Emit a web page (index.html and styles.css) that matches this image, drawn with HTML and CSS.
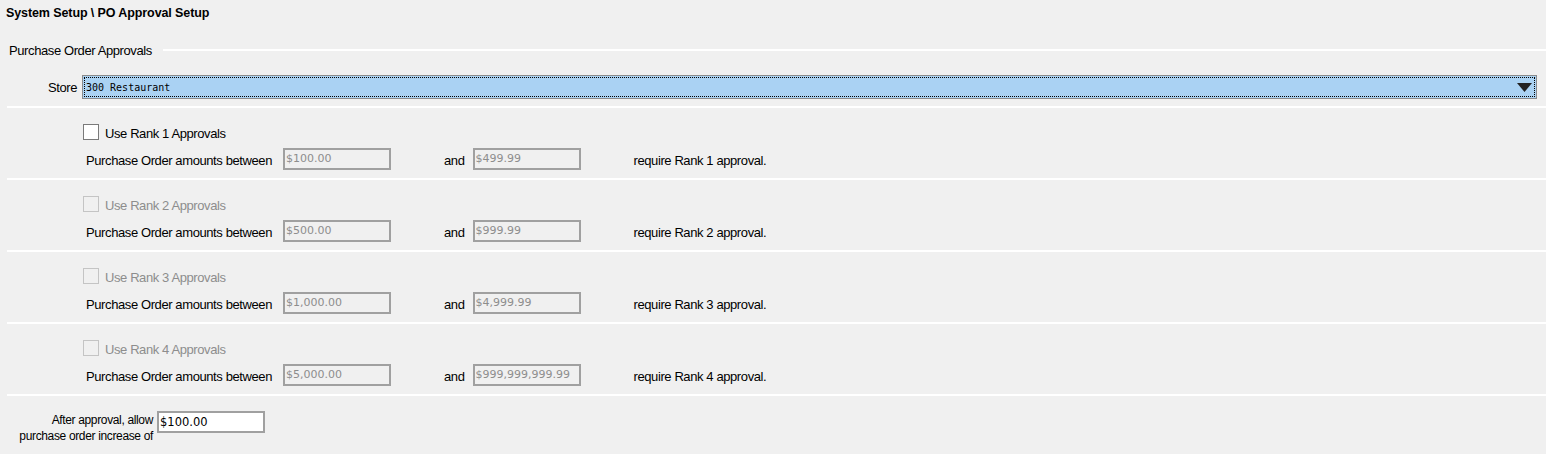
FILE: index.html
```html
<!DOCTYPE html>
<html lang="en">
<head>
    <meta charset="UTF-8">
    <title>PO Approval Setup</title>
    <link rel="stylesheet" href="styles.css">
</head>
<body>
    <div class="page">
        <div class="title">System Setup \ PO Approval Setup</div>

        <div class="group-head">
            <span>Purchase Order Approvals</span>
            <div class="rule"></div>
        </div>

        <div class="store-row">
            <label class="store-label">Store</label>
            <div class="select">
                <span class="select-text">300 Restaurant</span>
                <svg class="arrow" width="15" height="9" viewBox="0 0 15 9"><path d="M0 0 H15 L7.5 9 Z" fill="#222"/></svg>
            </div>
        </div>

        <div class="rank">
            <div class="check-row">
                <span class="box"></span>
                <span class="txt">Use Rank 1 Approvals</span>
            </div>
            <div class="amount-row">
                <span class="between txt">Purchase Order amounts between</span>
                <span class="field">$100.00</span>
                <span class="and txt">and</span>
                <span class="field">$499.99</span>
                <span class="req txt">require Rank 1 approval.</span>
            </div>
        </div>

        <div class="rank disabled">
            <div class="check-row">
                <span class="box"></span>
                <span class="txt">Use Rank 2 Approvals</span>
            </div>
            <div class="amount-row">
                <span class="between txt">Purchase Order amounts between</span>
                <span class="field">$500.00</span>
                <span class="and txt">and</span>
                <span class="field">$999.99</span>
                <span class="req txt">require Rank 2 approval.</span>
            </div>
        </div>

        <div class="rank disabled">
            <div class="check-row">
                <span class="box"></span>
                <span class="txt">Use Rank 3 Approvals</span>
            </div>
            <div class="amount-row">
                <span class="between txt">Purchase Order amounts between</span>
                <span class="field">$1,000.00</span>
                <span class="and txt">and</span>
                <span class="field">$4,999.99</span>
                <span class="req txt">require Rank 3 approval.</span>
            </div>
        </div>

        <div class="rank disabled">
            <div class="check-row">
                <span class="box"></span>
                <span class="txt">Use Rank 4 Approvals</span>
            </div>
            <div class="amount-row">
                <span class="between txt">Purchase Order amounts between</span>
                <span class="field">$5,000.00</span>
                <span class="and txt">and</span>
                <span class="field">$999,999,999.99</span>
                <span class="req txt">require Rank 4 approval.</span>
            </div>
        </div>

        <div class="increase">
            <div class="increase-label">After approval, allow<br>purchase order increase of</div>
            <span class="field white">$100.00</span>
        </div>
    </div>
</body>
</html>
```

FILE: styles.css
```css
html, body {
    margin: 0;
    padding: 0;
    background: #f0f0f0;
    font-family: 'Liberation Sans', Arial, sans-serif;
    font-size: 13px;
    letter-spacing: -0.4px;
    color: #000;
}
.page {
    width: 1546px;
    height: 454px;
    overflow: hidden;
}
.title {
    font-weight: bold;
    font-size: 12.5px;
    letter-spacing: -0.1px;
    padding: 6px 0 0 6px;
    height: 16px;
    line-height: 14px;
}
.group-head {
    display: flex;
    align-items: center;
    padding: 20px 0 0 9px;
    height: 18px;
}
.group-head span {
    line-height: 16px;
}
.rule {
    flex: 1;
    height: 2px;
    background: #fff;
    margin: 0 0 2px 11px;
}
.store-row {
    display: flex;
    align-items: center;
    margin-top: 15px;
    height: 24px;
}
.store-label {
    width: 82px;
    text-align: right;
    padding-right: 5px;
    box-sizing: border-box;
}
.select {
    width: 1455px;
    height: 24px;
    box-sizing: border-box;
    border: 1px solid #8c8c8c;
    background: #aad2f3;
    display: flex;
    align-items: center;
    justify-content: space-between;
    position: relative;
}
.select::after {
    content: '';
    position: absolute;
    inset: 1px;
    border: 1px dotted #000;
}
.select-text {
    font-family: 'DejaVu Sans Mono', monospace;
    font-size: 10px;
    letter-spacing: 0;
    padding-left: 3px;
}
.arrow {
    margin-right: 4px;
}
.rank {
    margin-left: 7px;
    border-top: 2px solid #fff;
    height: 70px;
    padding-left: 76px;
}
.store-row + .rank {
    margin-top: 7px;
}
.txt {
    padding-top: 2px;
}
.check-row {
    display: flex;
    align-items: center;
    height: 16px;
    margin-top: 16px;
}
.box {
    width: 16px;
    height: 16px;
    box-sizing: border-box;
    border: 1px solid #7a7a7a;
    background: #fff;
    margin-right: 6px;
}
.disabled .check-row {
    color: #8d8d8d;
}
.disabled .box {
    border-color: #c4c4c4;
    background: #f0f0f0;
}
.amount-row {
    display: flex;
    align-items: center;
    margin-top: 8px;
    height: 22px;
}
.between {
    width: 200px;
    padding-left: 3px;
    box-sizing: border-box;
}
.field {
    width: 108px;
    height: 22px;
    box-sizing: border-box;
    border: 2px solid #a0a0a0;
    font-family: 'DejaVu Sans', sans-serif;
    font-size: 11px;
    letter-spacing: 0;
    color: #8d8d8d;
    line-height: 18px;
    padding-left: 1px;
    white-space: nowrap;
    overflow: hidden;
}
.and {
    margin: 0 8px 0 53px;
}
.req {
    padding-left: 53px;
}
.increase {
    margin-left: 7px;
    border-top: 2px solid #fff;
    display: flex;
    align-items: flex-start;
    padding-top: 15px;
}
.increase-label {
    width: 146px;
    margin-right: 4px;
    text-align: right;
    line-height: 16px;
    padding-top: 1px;
    font-size: 12px;
    letter-spacing: -0.35px;
}
.field.white {
    background: #fff;
    color: #000;
    font-size: 11.5px;
}
```
